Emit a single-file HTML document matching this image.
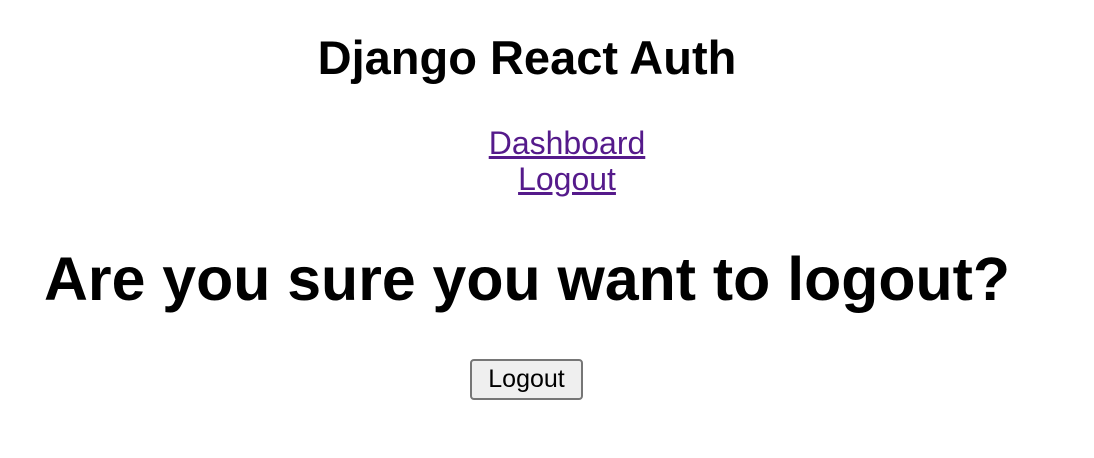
<!DOCTYPE html>
<html><head><meta charset="utf-8"><style>
html,body{margin:0;padding:0;background:#fff;width:1094px;height:458px;overflow:hidden;font-family:"Liberation Sans",Arial,sans-serif;color:#000}
.t{position:absolute;left:0;width:1054px;text-align:center;top:31px;font-size:47px;font-weight:bold;line-height:54px}
.links{position:absolute;left:488px;width:158px;text-align:center;top:125px;font-size:32px;line-height:36px}
.links a{color:#551a8b;text-decoration:underline;display:block}
.h{position:absolute;left:44px;top:243px;font-size:60.8px;font-weight:bold;line-height:72px;white-space:nowrap}
.btn{position:absolute;left:470px;top:359px;width:113px;height:41px;box-sizing:border-box;border:2px solid #767676;border-radius:4px;background:#efefef;font-family:"Liberation Sans",Arial,sans-serif;font-size:25px;padding:0;color:#000}
</style></head><body>
<div class="t">Django React Auth</div>
<div class="links"><a href="#">Dashboard</a><a href="#">Logout</a></div>
<div class="h">Are you sure you want to logout?</div>
<button class="btn">Logout</button>
</body></html>
